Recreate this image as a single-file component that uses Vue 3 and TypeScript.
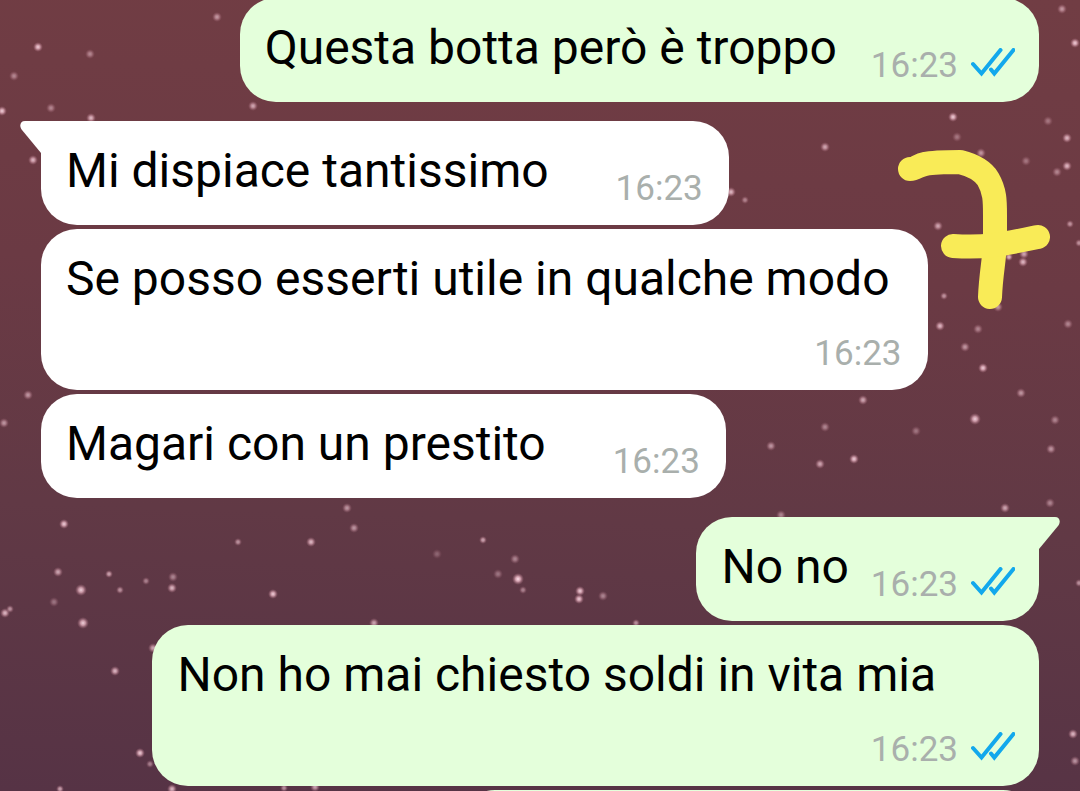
<script setup lang="ts">
interface Message {
  id: number
  text: string
  time: string
  sent: boolean
  tail: boolean
  layout: 'inline' | 'wide' | 'stacked'
}

const messages: Message[] = [
  { id: 1, text: 'Questa botta però è troppo', time: '16:23', sent: true, tail: false, layout: 'wide' },
  { id: 2, text: 'Mi dispiace tantissimo', time: '16:23', sent: false, tail: true, layout: 'wide' },
  { id: 3, text: 'Se posso esserti utile in qualche modo', time: '16:23', sent: false, tail: false, layout: 'stacked' },
  { id: 4, text: 'Magari con un prestito', time: '16:23', sent: false, tail: false, layout: 'wide' },
  { id: 5, text: 'No no', time: '16:23', sent: true, tail: true, layout: 'inline' },
  { id: 6, text: 'Non ho mai chiesto soldi in vita mia', time: '16:23', sent: true, tail: false, layout: 'stacked' },
]

// x, y, radius, opacity
const stars: [number, number, number, number][] = [
  [217, 17, 3, 0.6], [38, 47, 3, 0.9], [90, 54, 3, 0.5], [14, 76, 3, 0.5], [2, 111, 3, 0.9],
  [51, 108, 3, 0.5], [91, 118, 3, 0.8], [253, 106, 3, 0.7], [33, 160, 3, 0.8],
  [1062, 9, 3, 0.6], [1075, 43, 3, 0.9], [953, 117, 3, 0.9], [957, 137, 3, 0.4], [1048, 121, 3, 0.4],
  [1067, 138, 3, 0.8], [1026, 161, 3, 0.4], [1067, 166, 3, 0.8], [1057, 172, 3, 0.5], [981, 153, 3, 0.6],
  [938, 226, 3, 0.7], [1070, 224, 2, 0.6], [1023, 262, 3, 0.8], [1024, 254, 3, 0.7], [1009, 257, 2, 0.8], [1079, 243, 2, 0.6],
  [944, 296, 2, 0.6], [998, 307, 3, 0.6], [825, 147, 3, 0.7], [731, 192, 3, 0.8], [745, 200, 2, 0.5], [983, 368, 3, 0.9],
  [940, 326, 3, 0.8], [978, 329, 3, 0.5], [965, 347, 3, 0.6], [1068, 324, 3, 0.5],
  [863, 400, 3, 0.7], [825, 427, 3, 0.5], [771, 446, 3, 0.6], [820, 464, 3, 0.7], [854, 459, 3, 0.9],
  [916, 431, 3, 0.4], [975, 419, 4, 0.9], [1021, 393, 3, 0.6], [1055, 420, 3, 0.5], [1051, 449, 3, 0.6],
  [1005, 508, 3, 0.7], [1050, 503, 3, 0.5], [781, 515, 3, 0.5],
  [28, 395, 3, 0.6], [4, 423, 3, 0.6], [1079, 583, 2, 0.6], [1073, 734, 3, 0.8], [1075, 761, 3, 0.6],
  [64, 524, 3, 0.9], [58, 572, 3, 0.7], [81, 590, 4, 0.9], [54, 602, 3, 0.4], [83, 623, 4, 0.9],
  [5, 613, 3, 0.8], [10, 609, 2, 0.6], [109, 574, 2, 0.7], [120, 590, 2, 0.6], [146, 581, 2, 0.5],
  [173, 577, 3, 0.5], [172, 588, 3, 0.8], [273, 594, 3, 0.9], [238, 542, 2, 0.6], [311, 542, 3, 0.8],
  [347, 508, 3, 0.6], [354, 528, 3, 0.6], [115, 671, 3, 0.8], [153, 648, 3, 0.7], [140, 753, 3, 0.9],
  [150, 764, 2, 0.5], [172, 789, 3, 0.8], [60, 789, 2, 0.7], [284, 788, 2, 0.6], [315, 787, 3, 0.7],
  [437, 554, 3, 0.3], [483, 540, 2, 0.7], [515, 559, 3, 0.5], [498, 574, 3, 0.4], [518, 579, 4, 1],
  [523, 590, 2, 0.5], [580, 591, 3, 0.9], [579, 599, 3, 0.9], [603, 596, 3, 0.5], [374, 623, 3, 0.7], [636, 623, 2, 0.6],
]
</script>

<template>
  <main class="chat">
    <svg class="sky" aria-hidden="true">
      <defs>
        <radialGradient id="glow">
          <stop offset="0" stop-color="#ffe3ed" />
          <stop offset="0.4" stop-color="#e8b4c2" stop-opacity="0.85" />
          <stop offset="1" stop-color="#a86b7c" stop-opacity="0" />
        </radialGradient>
      </defs>
      <circle v-for="(s, i) in stars" :key="i" :cx="s[0]" :cy="s[1]" :r="s[2] + 2" :opacity="s[3]" fill="url(#glow)" />
    </svg>

    <section class="messages">
      <article
        v-for="m in messages"
        :key="m.id"
        class="bubble"
        :class="[m.sent ? 'sent' : 'received', m.layout, { tailed: m.tail }]"
      >
        <svg v-if="m.tail" class="tail" viewBox="0 0 22 34" aria-hidden="true">
          <path d="M22 0H5C0 0-1 5 2 9L21 32H22Z" />
        </svg>
        <p class="text">{{ m.text }}</p>
        <footer class="meta">
          <time>{{ m.time }}</time>
          <svg v-if="m.sent" class="ticks" viewBox="0 0 44 36" role="img" aria-label="Letto">
            <path d="M2 16L10.5 25.5L29.5 2M20 21.500L23.3 25.5L42.5 2" />
          </svg>
        </footer>
      </article>
      <article class="bubble sent next"></article>
    </section>

    <svg class="doodle" viewBox="0 0 152 160" role="img" aria-label="7">
      <path d="M12 19C18 19 20 15 27 14C36 12 50 12 62 12C74 15 85 21 90 29C97 41 97 51 97 65V90C97 107 93 122 92 147" />
      <path d="M55 96C88 98 101 95 140 87" />
    </svg>
  </main>
</template>

<style>
body {
  margin: 0;
  overflow: hidden;
}
</style>

<style scoped>
.chat {
  position: relative;
  height: 100vh;
  overflow: hidden;
  background: linear-gradient(182deg, #713d44 0%, #6b3a44 35%, #613945 65%, #563345 100%);
  font-family: Roboto, "Liberation Sans", sans-serif;
}
.sky {
  position: absolute;
  inset: 0;
  width: 100%;
  height: 100%;
}
.messages {
  position: relative;
  display: flex;
  flex-direction: column;
  gap: 4px;
  padding: 0 41px;
  margin-top: -2px;
}
.bubble {
  position: relative;
  display: flex;
  box-sizing: border-box;
  min-height: 104px;
  padding: 16px 26px 18px 25px;
  border-radius: 36px;
}
.received {
  align-self: flex-start;
  background: #fff;
}
.sent {
  align-self: flex-end;
  background: #e4ffdb;
  padding-right: 24px;
}
.tailed {
  margin-top: 15px;
}
.tailed.received {
  border-top-left-radius: 0;
}
.tailed.sent {
  border-top-right-radius: 0;
}
.tail {
  position: absolute;
  top: 0;
  left: -21px;
  width: 22px;
  height: 34px;
  fill: #fff;
}
.sent .tail {
  left: auto;
  right: -21px;
  transform: scaleX(-1);
  fill: #e4ffdb;
}
.text {
  margin: 0;
  font-size: 48px;
  line-height: 68px;
  white-space: nowrap;
  color: #000;
}
.meta {
  display: flex;
  align-items: center;
  align-self: flex-end;
  gap: 13px;
  margin-left: 22px;
  font-size: 35px;
  line-height: 36px;
  color: #a9afac;
}
.wide .meta {
  margin-left: 34px;
}
.received.wide .meta {
  margin-left: 67px;
}
.stacked {
  flex-direction: column;
  min-height: 161px;
}
.stacked .text {
  padding-right: 12px;
}
.sent.stacked .text {
  padding-right: 79px;
}
.stacked .meta {
  margin-top: auto;
}
.ticks {
  width: 44px;
  height: 36px;
  fill: none;
  stroke: #12a8ec;
  stroke-width: 4;
  stroke-linecap: round;
  stroke-linejoin: miter;
}
.next {
  width: 580px;
}
.doodle {
  position: absolute;
  top: 150px;
  right: 30px;
  width: 152px;
  height: 160px;
  fill: none;
  stroke: #f9eb57;
  stroke-width: 24;
  stroke-linecap: round;
  stroke-linejoin: round;
}
</style>
